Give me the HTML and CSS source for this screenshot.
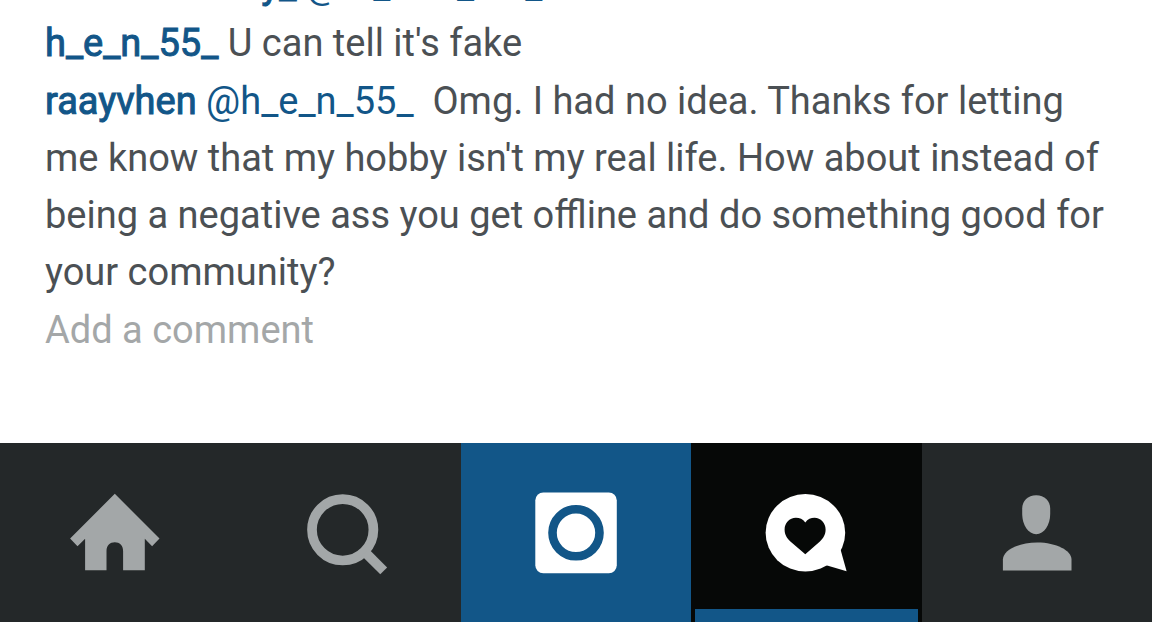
FILE: index.html
```html
<!DOCTYPE html>
<html lang="en">
<head>
  <meta charset="UTF-8">
  <meta name="viewport" content="width=device-width, initial-scale=1">
  <title>Comments</title>
  <link rel="stylesheet" href="styles.css">
</head>
<body>
  <main class="feed">
    <div class="comments">
      <p class="comment"><a class="user" href="#">hannahowney_</a> <a class="mention" href="#">@th_that_tell_</a></p>
      <p class="comment"><a class="user" href="#">h_e_n_55_</a> U can tell it's fake</p>
      <p class="comment"><a class="user" href="#">raayvhen</a> <a class="mention" href="#">@h_e_n_55_</a>&nbsp; Omg. I had no idea. Thanks for letting me know that my hobby isn't my real life. How about instead of being a negative ass you get offline and do something good for your community?</p>
      <button class="add-comment" type="button">Add a comment</button>
    </div>
  </main>

  <nav class="tabs">
    <a class="tab" href="#" aria-label="Home">
      <svg class="icon" viewBox="0 0 100 100">
        <path d="M49.8 10.8L94.5 55.5L87.1 63.2L79.8 55.8V87.2H58.1V68C58.1 62.5 54.6 59.2 49.8 59.2S41.5 62.5 41.5 68V87.2H20.1V55.8L12.5 63.2L5.1 55.5Z"/>
      </svg>
    </a>
    <a class="tab" href="#" aria-label="Search">
      <svg class="icon" viewBox="0 0 100 100" fill="none" stroke-width="9.7">
        <circle class="line" cx="46.7" cy="46.8" r="30.7"/>
        <path class="line" d="M69 69.2L87.7 87.9"/>
      </svg>
    </a>
    <a class="tab tab-camera" href="#" aria-label="Camera">
      <svg class="icon" viewBox="0 0 100 100">
        <rect x="9.3" y="9.5" width="81.5" height="80.8" rx="8"/>
        <circle class="lens" cx="50" cy="49.8" r="23.5" stroke-width="8.6"/>
      </svg>
    </a>
    <a class="tab tab-active" href="#" aria-label="Activity">
      <svg class="icon" viewBox="0 0 100 100">
        <ellipse cx="49.4" cy="49.8" rx="39.8" ry="38.7"/>
        <path d="M84.6 66.8L90.6 88.2L70.3 82.2L66 70L80 60Z"/>
        <path class="heart" d="M49.3 39.5C47 36.2 43.5 34.8 39.9 34.8C33.4 34.8 28.6 40 28.6 46.5C28.6 52 31 55.2 34.4 58.4L49.3 71.2L63.9 58.4C67.2 55.2 69.6 52 69.6 46.5C69.6 40 64.8 34.8 58.5 34.8C55 34.8 51.6 36.2 49.3 39.5Z"/>
      </svg>
    </a>
    <a class="tab" href="#" aria-label="Profile">
      <svg class="icon" viewBox="0 0 100 100">
        <path d="M49.2 12.2C57.5 12.2 63.2 18 63.2 25.5V31C63.2 42 57 51.2 49.2 51.2S35.2 42 35.2 31V25.5C35.2 18 40.9 12.2 49.2 12.2Z"/>
        <path d="M15.9 87.4V76.5C15.9 67.5 31 59.5 50.2 59.5S84.5 67.5 84.5 76.5V87.4Z"/>
      </svg>
    </a>
  </nav>
</body>
</html>
```
FILE: styles.css
```css
* {
  margin: 0;
  padding: 0;
  box-sizing: border-box;
}

body {
  height: 100vh;
  display: flex;
  flex-direction: column;
  background: #fff;
  color: #4b5054;
  font-family: Roboto, sans-serif;
  font-size: 38px;
  line-height: 57px;
}

a {
  text-decoration: none;
}

/* newest comments stay at the bottom, older ones run off the top */
.feed {
  flex: 1;
  min-height: 0;
  overflow: hidden;
  display: flex;
  flex-direction: column;
  justify-content: flex-end;
  padding: 0 40px 84px 45px;
}

.comments {
  display: flex;
  flex-direction: column;
  align-items: flex-start;
  gap: 1px;
}

.user,
.mention {
  color: #125688;
}

.user {
  -webkit-text-stroke: 1px #125688;
}

.add-comment {
  border: none;
  background: none;
  color: #a4a7a8;
  font: inherit;
  cursor: pointer;
}

.tabs {
  display: grid;
  grid-template-columns: repeat(5, 1fr);
  height: 179px;
  background: #242829;
}

.tab {
  display: flex;
  align-items: center;
  justify-content: center;
  color: #a3a7a8;
}

.tab-camera {
  background: #125688;
  color: #fff;
}

.tab-active {
  position: relative;
  background: #060807;
  color: #fff;
}

.tab-active::after {
  content: "";
  position: absolute;
  left: 4px;
  right: 4px;
  bottom: 0;
  height: 13px;
  background: #125688;
}

.icon {
  width: 100px;
  height: 100px;
  fill: currentColor;
}

.line {
  fill: none;
  stroke: currentColor;
}

.lens {
  fill: none;
  stroke: #125688;
}

.heart {
  fill: #060807;
}
```
